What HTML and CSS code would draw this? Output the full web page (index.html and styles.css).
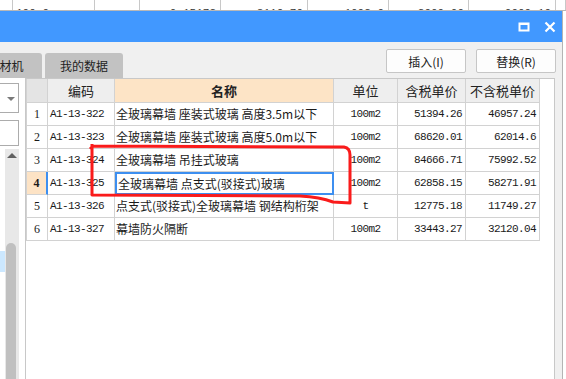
FILE: index.html
```html
<!DOCTYPE html>
<html lang="zh-CN">
<head>
    <meta charset="UTF-8">
    <title>插入定额</title>
    <link rel="stylesheet" href="styles.css">
</head>
<body>

    <div class="bgrow">
        <div class="bgcell"></div>
        <div class="bgcell left">100.0</div>
        <div class="bgcell"></div>
        <div class="bgcell">0.15172</div>
        <div class="bgcell">3116.70</div>
        <div class="bgcell">1002.0</div>
        <div class="bgcell">2000.00</div>
        <div class="bgcell">0000.10</div>
        <div class="bgcell"></div>
    </div>

    <div class="window">
        <div class="titlebar">
            <svg class="tb-icon" width="12" height="12" viewBox="0 0 12 12">
                <rect x="1.5" y="2.5" width="9" height="7" fill="none" stroke="#fff" stroke-width="2"/>
                <line x1="1" y1="3" x2="11" y2="3" stroke="#fff" stroke-width="2"/>
            </svg>
            <svg class="tb-icon" width="12" height="12" viewBox="0 0 12 12">
                <path d="M1.5 1.5 L10.5 10.5 M10.5 1.5 L1.5 10.5" stroke="#fff" stroke-width="2.2"/>
            </svg>
        </div>

        <div class="toolbar">
            <div class="tabs">
                <div class="tab tab-cut">材机</div>
                <div class="tab">我的数据</div>
            </div>
            <div class="buttons">
                <button class="btn">插入(I)</button>
                <button class="btn">替换(R)</button>
            </div>
        </div>

        <div class="main">
            <div class="side">
                <div class="combo"><span class="caret"></span></div>
                <div class="search"></div>
                <div class="tree">
                    <div class="tree-items"><div class="tree-sel"></div></div>
                    <div class="scroll">
                        <span class="scroll-up"></span>
                        <div class="thumb"></div>
                    </div>
                </div>
            </div>

            <div class="panel">
                <div class="row head">
                    <div class="cell num corner"></div>
                    <div class="cell center">编码</div>
                    <div class="cell center name-head">名称</div>
                    <div class="cell center">单位</div>
                    <div class="cell center">含税单价</div>
                    <div class="cell center">不含税单价</div>
                </div>
                <div class="row">
                    <div class="cell num">1</div>
                    <div class="cell code">A1-13-322</div>
                    <div class="cell name">全玻璃幕墙 座装式玻璃 高度3.5m以下</div>
                    <div class="cell unit">100m2</div>
                    <div class="cell price">51394.26</div>
                    <div class="cell price">46957.24</div>
                </div>
                <div class="row">
                    <div class="cell num">2</div>
                    <div class="cell code">A1-13-323</div>
                    <div class="cell name">全玻璃幕墙 座装式玻璃 高度5.0m以下</div>
                    <div class="cell unit">100m2</div>
                    <div class="cell price">68620.01</div>
                    <div class="cell price">62014.6</div>
                </div>
                <div class="row">
                    <div class="cell num">3</div>
                    <div class="cell code">A1-13-324</div>
                    <div class="cell name">全玻璃幕墙 吊挂式玻璃</div>
                    <div class="cell unit">100m2</div>
                    <div class="cell price">84666.71</div>
                    <div class="cell price">75992.52</div>
                </div>
                <div class="row current">
                    <div class="cell num">4</div>
                    <div class="cell code">A1-13-325</div>
                    <div class="cell name editing">全玻璃幕墙 点支式(驳接式)玻璃</div>
                    <div class="cell unit">100m2</div>
                    <div class="cell price">62858.15</div>
                    <div class="cell price">58271.91</div>
                </div>
                <div class="row">
                    <div class="cell num">5</div>
                    <div class="cell code">A1-13-326</div>
                    <div class="cell name">点支式(驳接式)全玻璃幕墙 钢结构桁架</div>
                    <div class="cell unit">t</div>
                    <div class="cell price">12775.18</div>
                    <div class="cell price">11749.27</div>
                </div>
                <div class="row">
                    <div class="cell num">6</div>
                    <div class="cell code">A1-13-327</div>
                    <div class="cell name">幕墙防火隔断</div>
                    <div class="cell unit">100m2</div>
                    <div class="cell price">33443.27</div>
                    <div class="cell price">32120.04</div>
                </div>
            </div>

            <div class="gutter"></div>
        </div>
    </div>

    <!-- hand drawn marker over the grid -->
    <svg class="marker" width="566" height="379" viewBox="0 0 566 379">
        <path d="M90 149 L93 146 L344 147 Q350 148 350 155 L350 203 L333 202 Q320 197 300 196 L92 195 L92 144"
              fill="none" stroke="#fa1b1b" stroke-width="3" stroke-linejoin="round"/>
    </svg>

</body>
</html>
```

FILE: styles.css
```css
* {
    margin: 0px;
    padding: 0px;
    box-sizing: border-box;
}

html, body {
    width: 566px;
    height: 379px;
    overflow: hidden;
    background-color: #ffffff;
    font-family: "Noto Sans CJK SC", sans-serif;
    font-size: 12px;
    color: #1a1a1a;
}

/* window behind, only its last row shows */
.bgrow {
    display: grid;
    grid-template-columns: 13px 82px 45px 81px 87px 81px 80px 87px 10px;
    height: 11px;
    border-bottom: 1px solid #b8b8b8;
    overflow: hidden;
}

.bgcell {
    border-right: 1px solid #c8c8c8;
    font-family: "Liberation Mono", monospace;
    font-size: 11px;
    line-height: 11px;
    padding-top: 8px;
    padding-right: 4px;
    text-align: right;
    color: #333;
    overflow: hidden;
    white-space: nowrap;
}

.bgcell.left {
    text-align: left;
    padding-left: 3px;
}

.window {
    width: 563px;
    height: 368px;
    background-color: #f0f0f0;
    border-right: 1px solid #b4b4b4;
    display: flex;
    flex-direction: column;
}

.titlebar {
    height: 31px;
    background-color: #4198ff;
    display: flex;
    justify-content: flex-end;
    align-items: center;
    gap: 14px;
    padding-right: 6px;
}

.tb-icon {
    display: block;
    margin-top: 1px;
}

.toolbar {
    height: 36px;
    display: flex;
    justify-content: space-between;
    align-items: flex-start;
}

.tabs {
    display: flex;
    gap: 3px;
    align-self: flex-end;
}

.tab {
    height: 25px;
    width: 78px;
    background-color: #c2c2c2;
    border-radius: 3px 3px 0 0;
    text-align: center;
    line-height: 25px;
    font-size: 12px;
    color: #222;
}

.tab-cut {
    width: 61px;
    margin-left: -19px;
}

.buttons {
    display: flex;
    gap: 10px;
    padding-top: 7px;
    padding-right: 6px;
}

.btn {
    width: 80px;
    height: 24px;
    background-color: #fdfdfd;
    border: 1px solid #c6c6c6;
    border-radius: 2px;
    font-family: "Noto Sans CJK SC", sans-serif;
    font-size: 12px;
    color: #222;
}

.main {
    flex: 1;
    display: flex;
    min-height: 0;
}

.side {
    width: 25px;
    background-color: #ffffff;
    padding-top: 5px;
    overflow: hidden;
}

.combo {
    position: relative;
    width: 19px;
    height: 30px;
    border: 1px solid #acacac;
    border-left: none;
    background-color: #fff;
}

.caret {
    position: absolute;
    left: 7px;
    top: 13px;
    border-left: 4px solid transparent;
    border-right: 4px solid transparent;
    border-top: 4px solid #7a7a7a;
}

.search {
    width: 19px;
    height: 26px;
    margin-top: 7px;
    border: 1px solid #acacac;
    border-left: none;
    background-color: #fff;
}

.tree {
    display: flex;
    margin-top: 3px;
    height: 240px;
}

.tree-items {
    width: 5px;
}

.tree-sel {
    height: 21px;
    margin-top: 102px;
    background-color: #cce8ff;
}

.scroll {
    width: 14px;
    background-color: #e8e8e8;
    display: flex;
    flex-direction: column;
    align-items: center;
    padding-top: 4px;
}

.scroll-up {
    border-left: 5px solid transparent;
    border-right: 5px solid transparent;
    border-bottom: 5px solid #606060;
}

.thumb {
    width: 10px;
    height: 150px;
    margin-top: 85px;
    margin-right: 2px;
    background-color: #c0c0c0;
    border-radius: 5px 5px 0 0;
}

.panel {
    width: 530px;
    background-color: #ffffff;
    border-left: 1px solid #c8c8c8;
    border-top: 1px solid #c8c8c8;
    border-right: 1px solid #c8c8c8;
}

.gutter {
    flex: 1;
}

.row {
    display: grid;
    grid-template-columns: 22px 67px 219px 64px 68px 74px;
    height: 23px;
}

.row.head {
    height: 24px;
}

.cell {
    border-right: 1px solid #d2d2d2;
    border-bottom: 1px solid #d2d2d2;
    line-height: 22px;
    white-space: nowrap;
    overflow: hidden;
}

.head .cell {
    background-color: #eeeeee;
    font-size: 13px;
    line-height: 23px;
    color: #222;
}

.center {
    text-align: center;
}

.head .name-head {
    background-color: #fde4c6;
    font-weight: bold;
}

.num {
    border-left: 1px solid #d2d2d2;
    text-align: center;
    font-family: "Liberation Serif", serif;
    font-size: 12px;
}

.head .corner {
    background-color: #e4e4e4;
}

.code {
    padding-left: 2px;
    font-family: "Liberation Mono", monospace;
    font-size: 11px;
    letter-spacing: -0.6px;
}

.name {
    padding-left: 1px;
    font-size: 12px;
}

.unit {
    text-align: center;
    font-family: "Liberation Mono", monospace;
    font-size: 11px;
    letter-spacing: -0.6px;
}

.price {
    text-align: right;
    padding-right: 3px;
    font-family: "Liberation Mono", monospace;
    font-size: 11px;
    letter-spacing: -0.6px;
}

.current .num {
    background-color: #fde3c5;
    font-weight: bold;
    border-right: 2px solid #3d8ff0;
}

.name.editing {
    border: 2px solid #3d8ff0;
    line-height: 19px;
}

.marker {
    position: absolute;
    left: 0;
    top: 0;
    pointer-events: none;
}
```
